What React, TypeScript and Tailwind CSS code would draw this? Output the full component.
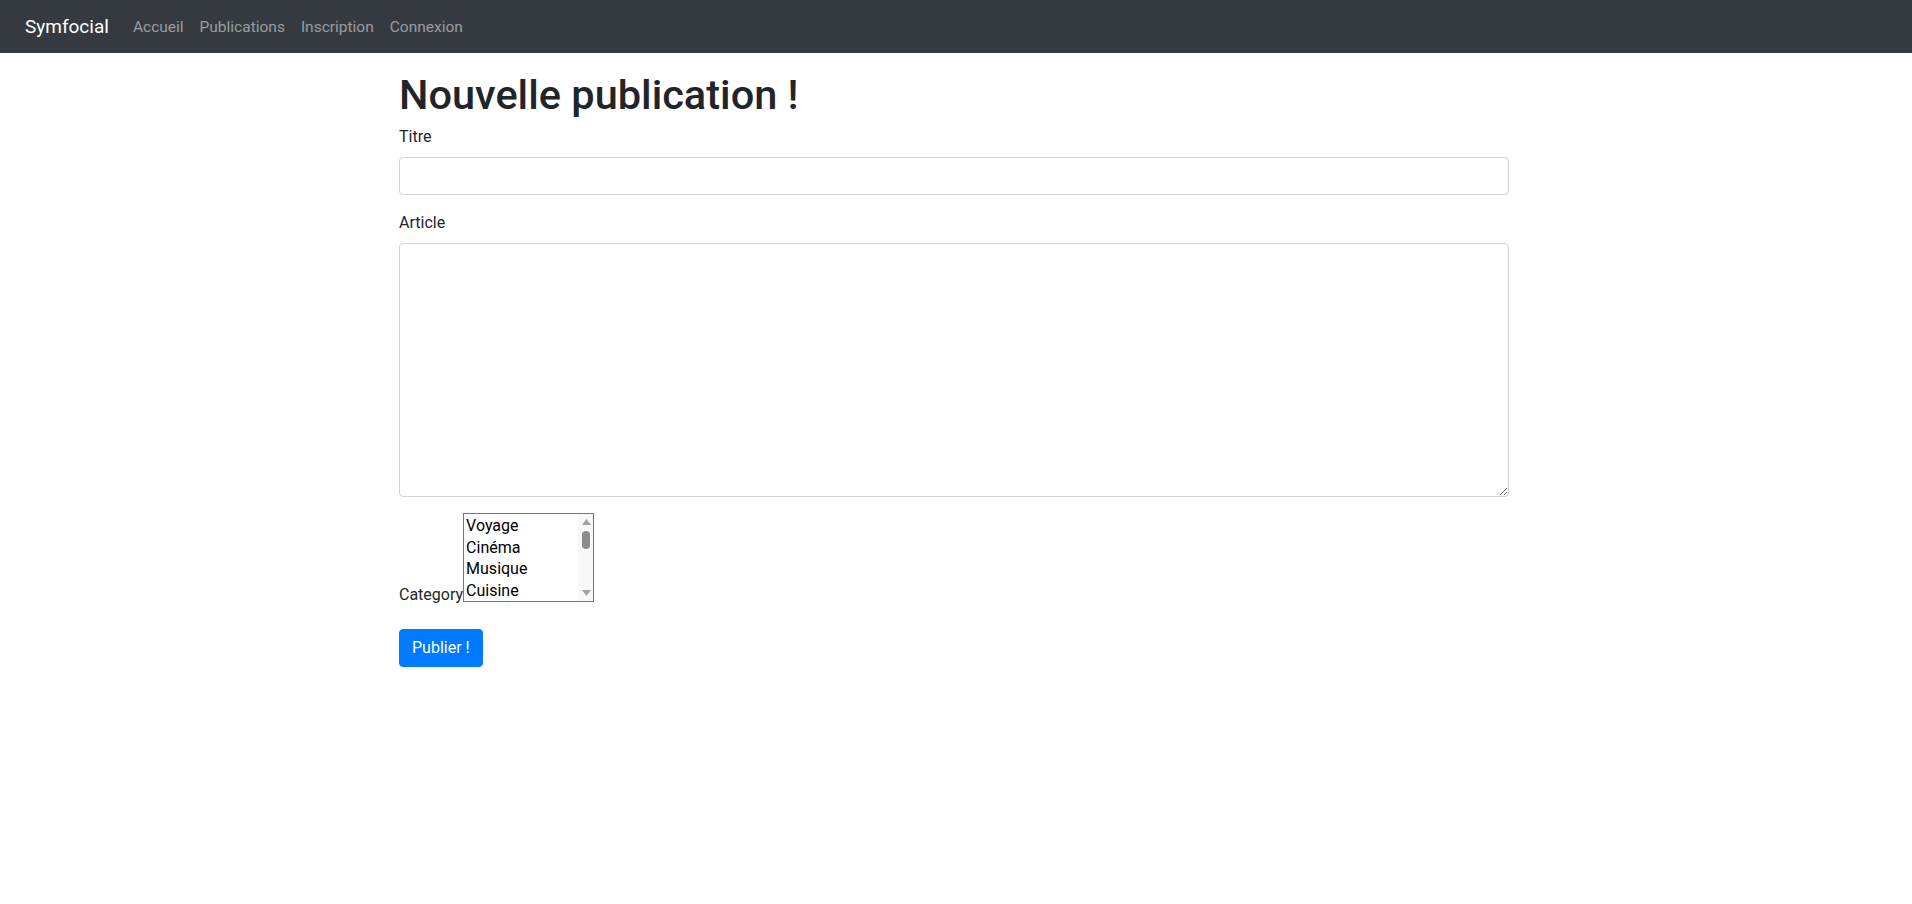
import { useState } from 'react';

const navLinks = ['Accueil', 'Publications', 'Inscription', 'Connexion'];

const categories = [
  'Voyage', 'Cinéma', 'Musique', 'Cuisine', 'Sport', 'Technologie', 'Mode', 'Art',
  'Santé', 'Littérature', 'Jeux vidéo', 'Nature', 'Photographie', 'Science', 'Politique',
];

function CategoryList({ selected, onToggle }: { selected: string[]; onToggle: (c: string) => void }) {
  return (
    <div id="category" className="w-[131px] h-[89px] border border-[#767676] bg-white flex text-black">
      <ul className="flex-1 overflow-y-scroll [scrollbar-width:none] pt-px">
        {categories.map(c => (
          <li
            key={c}
            onClick={() => onToggle(c)}
            className={`h-[21.5px] leading-[21.5px] px-[2px] whitespace-nowrap cursor-default ${selected.includes(c) ? 'bg-[#cecece]' : ''}`}
          >
            {c}
          </li>
        ))}
      </ul>
      <div className="w-[15px] bg-[#f8f8f8] flex flex-col items-center pt-[5px] pb-[5px] pl-px">
        <svg width="9" height="6" viewBox="0 0 9 6"><path d="M4.5 0 9 6H0z" fill="#a3a3a3" /></svg>
        <div className="mt-[6px] w-[8px] h-[18px] rounded-full bg-[#8c8c8c]" />
        <div className="flex-1" />
        <svg width="9" height="6" viewBox="0 0 9 6"><path d="M0 0h9L4.5 6z" fill="#a3a3a3" /></svg>
      </div>
    </div>
  );
}

export default function App() {
  const [title, setTitle] = useState('');
  const [article, setArticle] = useState('');
  const [selected, setSelected] = useState<string[]>([]);

  const toggle = (c: string) =>
    setSelected(s => (s.includes(c) ? s.filter(x => x !== c) : [...s, c]));

  return (
    <div className="min-h-screen bg-white text-[#212529] text-base leading-6 font-['Roboto',sans-serif]">
      <nav className="h-[53px] bg-[#343a40] flex items-center pl-[25px] pr-4">
        <a href="#" className="text-white text-[19px] leading-[30px] mr-4">Symfocial</a>
        <ul className="flex items-center">
          {navLinks.map(link => (
            <li key={link}>
              <a href="#" className="block px-2 text-[15.5px] text-white/50 hover:text-white/75">{link}</a>
            </li>
          ))}
        </ul>
      </nav>

      <div className="pr-1">
        <main className="max-w-[1140px] mx-auto px-[15px] pt-4">
          <h1 className="text-[41.5px] leading-[48px] font-medium mt-[2px] mb-[6px]">Nouvelle publication !</h1>
          <form onSubmit={e => e.preventDefault()}>
            <div className="mb-4">
              <label htmlFor="titre" className="block mb-2 pt-px -mt-px">Titre</label>
              <input
                id="titre"
                value={title}
                onChange={e => setTitle(e.target.value)}
                className="block w-full h-[38px] px-3 py-1.5 border border-[#ced4da] rounded bg-white"
              />
            </div>
            <div className="mb-4">
              <label htmlFor="article" className="block mb-2 pt-px -mt-px">Article</label>
              <textarea
                id="article"
                rows={10}
                value={article}
                onChange={e => setArticle(e.target.value)}
                className="block w-full h-[254px] px-3 py-1.5 border border-[#ced4da] rounded bg-white"
              />
            </div>
            <div className="flex items-end mb-[27px]">
              <label htmlFor="category" className="-mb-[5px] leading-6">Category</label>
              <CategoryList selected={selected} onToggle={toggle} />
            </div>
            <button type="submit" className="h-[38px] px-3 bg-[#007bff] text-white rounded border border-[#007bff]">
              Publier !
            </button>
          </form>
        </main>
      </div>
    </div>
  );
}
